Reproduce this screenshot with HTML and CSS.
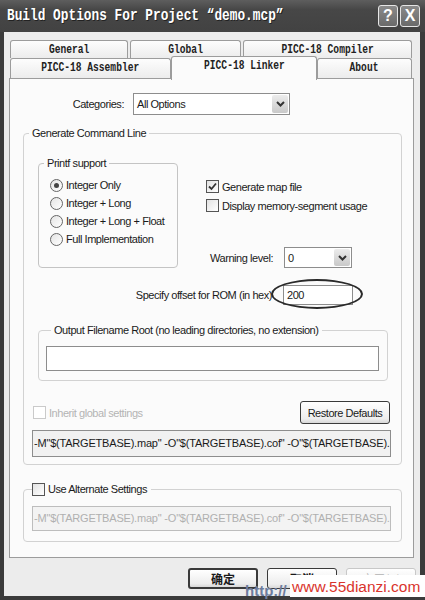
FILE: index.html
```html
<!DOCTYPE html>
<html>
<head>
    <title>Build Options For Project "demo.mcp"</title>
    <link rel="stylesheet" href="styles.css">
</head>
<body>
<div class="window">
    <div class="titlebar">
        <span class="title-wrap"><span class="title">Build Options For Project “demo.mcp”</span></span>
        <span class="caption-btn">?</span>
        <span class="caption-btn">X</span>
    </div>

    <div class="frame">
        <div class="tab-row row-top">
            <div class="tab"><span>General</span></div>
            <div class="tab"><span>Global</span></div>
            <div class="tab"><span>PICC-18 Compiler</span></div>
        </div>
        <div class="tab-row row-bottom">
            <div class="tab"><span>PICC-18 Assembler</span></div>
            <div class="tab active"><span>PICC-18 Linker</span></div>
            <div class="tab"><span>About</span></div>
        </div>

        <div class="panel">
            <div class="cat-row">
                <label class="cat-label">Categories:</label>
                <div class="select cat-select">
                    <span class="select-text">All Options</span>
                    <span class="select-arrow"><svg width="9" height="6" viewBox="0 0 9 6"><polyline points="1,1 4.5,4.5 8,1" fill="none" stroke="#333" stroke-width="2"/></svg></span>
                </div>
            </div>

            <fieldset class="group group-main">
                <legend>Generate Command Line</legend>

                <div class="gen-top">
                    <fieldset class="group printf">
                        <legend>Printf support</legend>
                        <div class="radio-row"><span class="radio checked"></span>Integer Only</div>
                        <div class="radio-row"><span class="radio"></span>Integer + Long</div>
                        <div class="radio-row"><span class="radio"></span>Integer + Long + Float</div>
                        <div class="radio-row"><span class="radio"></span>Full Implementation</div>
                    </fieldset>

                    <div class="gen-right">
                        <div class="check-row">
                            <span class="checkbox"><svg width="11" height="11" viewBox="0 0 11 11"><polyline points="2,5.5 4.5,8 9,2.5" fill="none" stroke="#333" stroke-width="1.8"/></svg></span>
                            Generate map file
                        </div>
                        <div class="check-row"><span class="checkbox"></span>Display memory-segment usage</div>

                        <div class="warn-row">
                            <label class="warn-label">Warning level:</label>
                            <div class="select warn-select">
                                <span class="select-text">0</span>
                                <span class="select-arrow"><svg width="9" height="6" viewBox="0 0 9 6"><polyline points="1,1 4.5,4.5 8,1" fill="none" stroke="#333" stroke-width="2"/></svg></span>
                            </div>
                        </div>
                    </div>
                </div>

                <div class="offset-row">
                    <label class="offset-label">Specify offset for ROM (in hex)</label>
                    <div class="offset-wrap">
                        <div class="edit offset-edit">200</div>
                        <span class="ellipse"></span>
                    </div>
                </div>

                <fieldset class="group output">
                    <legend>Output Filename Root (no leading directories, no extension)</legend>
                    <div class="edit output-edit"></div>
                </fieldset>

                <div class="inherit-row">
                    <div class="check-row disabled"><span class="checkbox"></span>Inherit global settings</div>
                    <button class="btn restore-btn">Restore Defaults</button>
                </div>

                <div class="edit cmd-box">-M"$(TARGETBASE).map" -O"$(TARGETBASE).cof" -O"$(TARGETBASE).hex"</div>
            </fieldset>

            <fieldset class="group alt">
                <legend><span class="checkbox"></span>Use Alternate Settings</legend>
                <div class="edit cmd-box alt-box">-M"$(TARGETBASE).map" -O"$(TARGETBASE).cof" -O"$(TARGETBASE).hex"</div>
            </fieldset>
        </div>

        <div class="buttons">
            <button class="btn dlg-btn default">确定</button>
            <button class="btn dlg-btn">取消</button>
            <button class="btn dlg-btn" disabled>应用(A)</button>
        </div>
    </div>

    <span class="wm-http">http://</span>
    <span class="watermark">www.55dianzi.com</span>
</div>
</body>
</html>
```

FILE: styles.css
```css
body {
    margin: 0;
    background: #fff;
}

.window {
    position: relative;
    width: 425px;
    height: 600px;
    display: flex;
    flex-direction: column;
    background: #3b3b3b;
    font-family: "Liberation Sans", Arial, sans-serif;
    font-size: 11px;
    letter-spacing: -0.45px;
    color: #1a1a1a;
    white-space: nowrap;
    overflow: hidden;
}

/* title bar */
.titlebar {
    height: 32px;
    display: flex;
    align-items: center;
    padding: 0 5px 0 7px;
    background: linear-gradient(#5e5e5e, #474747 30%, #424242);
}

.title-wrap {
    flex: 1;
}

/* the screenshot is squeezed sideways, so the mono captions are too */
.title {
    display: inline-block;
    transform: scaleX(0.8);
    transform-origin: left center;
    font-family: "Liberation Mono", monospace;
    font-weight: bold;
    font-size: 16px;
    letter-spacing: 0;
    color: #fff;
    text-shadow: 1px 1px 0 #222;
}

.caption-btn {
    width: 18px;
    height: 20px;
    margin-left: 2px;
    border: 1px solid #e6e6e6;
    border-radius: 3px;
    background: linear-gradient(#8a8a8a, #6a6a6a);
    color: #fff;
    font-weight: bold;
    font-size: 16px;
    letter-spacing: 0;
    text-align: center;
    line-height: 20px;
}

/* dialog body */
.frame {
    flex: 1;
    margin: 0 5px 4px 4px;
    padding-top: 8px;
    background: #ececec;
}

.tab-row {
    display: grid;
    margin-left: 6px;
    font-family: "Liberation Mono", monospace;
    font-weight: bold;
    font-size: 12px;
    letter-spacing: 0;
}

.row-top {
    grid-template-columns: 118px 111px 169px;
    grid-template-rows: 18px;
    column-gap: 2px;
}

.row-bottom {
    grid-template-columns: 161px 146px 95px;
    grid-template-rows: 20px;
}

.tab {
    border: 1px solid #9c9c9c;
    border-bottom: none;
    border-radius: 3px 3px 0 0;
    background: linear-gradient(#fdfdfd, #ececec);
    color: #222;
    text-align: center;
    line-height: 18px;
}

.tab span {
    display: inline-block;
    transform: scaleX(0.8);
}

.tab.active {
    position: relative;
    z-index: 1;
    height: 23px;
    margin-top: -2px;
    background: #fbfbfb;
    line-height: 19px;
}

.panel {
    height: 480px;
    width: 405px;
    margin-left: 5px;
    box-sizing: border-box;
    border: 1px solid #9c9c9c;
    background: #fbfbfb;
    padding-top: 14px;
}

/* controls */
.cat-row {
    display: flex;
    align-items: center;
    height: 22px;
}

.cat-label {
    width: 114px;
    margin-right: 9px;
    text-align: right;
}

.select {
    display: flex;
    align-items: stretch;
    box-sizing: border-box;
    border: 1px solid #8d8d8d;
    background: #fff;
}

.select-text {
    flex: 1;
    padding-left: 3px;
    display: flex;
    align-items: center;
}

.select-arrow {
    width: 16px;
    margin: 1px;
    border-radius: 2px;
    background: linear-gradient(#ececec, #c9c9c9);
    display: flex;
    align-items: center;
    justify-content: center;
}

.cat-select {
    width: 157px;
    height: 22px;
}

.group {
    margin: 0;
    padding: 0;
    min-width: 0;
    box-sizing: border-box;
    border: 1px solid #d2d2d2;
    border-radius: 4px;
}

.group legend {
    margin-left: 5px;
    padding: 0 3px;
    line-height: 15px;
}

.group-main {
    margin: 11px 0 0 13px;
    width: 379px;
    padding-bottom: 7px;
}

.gen-top {
    display: flex;
    margin-top: 15px;
}

.printf {
    flex-shrink: 0;
    margin-left: 14px;
    width: 140px;
    padding: 5px 0 3px 0;
    border-color: #c4c4c4;
}

.radio-row {
    height: 18px;
    display: flex;
    align-items: center;
    padding-left: 11px;
}

.radio {
    width: 13px;
    height: 13px;
    box-sizing: border-box;
    margin-right: 3px;
    border: 1px solid #666;
    border-radius: 50%;
    background: linear-gradient(135deg, #e4e4e4, #fff);
    display: flex;
    align-items: center;
    justify-content: center;
}

.radio.checked::after {
    content: "";
    width: 5px;
    height: 5px;
    border-radius: 50%;
    background: #444;
}

.gen-right {
    margin-left: 28px;
    padding-top: 21px;
}

.check-row {
    height: 19px;
    display: flex;
    align-items: center;
}

.checkbox {
    flex-shrink: 0;
    width: 13px;
    height: 13px;
    box-sizing: border-box;
    margin-right: 3px;
    border: 1px solid #555;
    background: linear-gradient(135deg, #e2e2e2, #fff);
    display: flex;
    align-items: center;
    justify-content: center;
}

.check-row.disabled {
    color: #b4b4b4;
}

.check-row.disabled .checkbox {
    border-color: #cacaca;
    background: #fff;
}

.warn-row {
    display: flex;
    align-items: center;
    margin-top: 32px;
    height: 21px;
}

.warn-label {
    width: 67px;
    margin-right: 11px;
    text-align: right;
}

.warn-select {
    width: 68px;
    height: 21px;
}

.offset-row {
    display: flex;
    align-items: center;
    margin-top: 17px;
    height: 20px;
}

.offset-label {
    width: 248px;
    margin-right: 11px;
    text-align: right;
}

.offset-wrap {
    position: relative;
}

.edit {
    box-sizing: border-box;
    border: 1px solid #8d8d8d;
    background: #fff;
    padding-left: 3px;
    overflow: hidden;
}

.offset-edit {
    width: 70px;
    height: 20px;
    line-height: 18px;
}

.ellipse {
    position: absolute;
    left: -12px;
    top: -6px;
    width: 92px;
    height: 30px;
    box-sizing: border-box;
    border: 2px solid #2a2a2a;
    border-radius: 50%;
}

.output {
    margin: 18px 0 0 14px;
    width: 350px;
    padding: 8px 0 9px 7px;
}

.output-edit {
    width: 333px;
    height: 25px;
}

.inherit-row {
    display: flex;
    justify-content: space-between;
    align-items: center;
    margin-top: 20px;
    padding: 0 11px 0 9px;
    height: 23px;
}

.btn {
    box-sizing: border-box;
    border: 1px solid #3a3a3a;
    border-radius: 3px;
    background: linear-gradient(#fff, #ededed 80%, #d8d8d8);
    font-family: inherit;
    font-size: 11px;
    letter-spacing: inherit;
    color: #1a1a1a;
    padding: 0;
}

.restore-btn {
    width: 90px;
    height: 23px;
}

.cmd-box {
    margin: 6px 0 0 8px;
    width: 359px;
    height: 27px;
    line-height: 25px;
    padding-left: 1px;
    letter-spacing: -0.2px;
    background: #f1f1f1;
}

.alt {
    margin: 17px 0 0 13px;
    width: 379px;
    padding-bottom: 10px;
}

.alt legend {
    display: flex;
    align-items: center;
    margin-left: 8px;
    padding: 0 4px 0 0;
}

.alt-box {
    margin-top: 9px;
    height: 25px;
    line-height: 23px;
    color: #b0b0b0;
    background: #f3f3f3;
    border-color: #bdbdbd;
}

/* bottom buttons */
.buttons {
    display: flex;
    justify-content: flex-end;
    gap: 9px;
    margin-top: 10px;
    padding-right: 4px;
}

.dlg-btn {
    width: 70px;
    height: 21px;
    font-family: "Noto Sans CJK SC", sans-serif;
    font-size: 12px;
    font-weight: bold;
    letter-spacing: 0;
}

.dlg-btn.default {
    border-width: 2px;
}

.dlg-btn:disabled {
    border-color: #c8c8c8;
    color: #bdbdbd;
    font-weight: normal;
}

/* site watermark pasted over the screenshot */
.wm-http {
    position: absolute;
    left: 245px;
    top: 582px;
    font-weight: bold;
    font-size: 15px;
    letter-spacing: 0;
    color: #6d7c9e;
}

.watermark {
    position: absolute;
    left: 290px;
    top: 575px;
    width: 135px;
    height: 22px;
    padding-left: 2px;
    box-sizing: border-box;
    background: #fff;
    font-size: 15.5px;
    letter-spacing: 0;
    line-height: 24px;
    color: #d9342c;
}
```
